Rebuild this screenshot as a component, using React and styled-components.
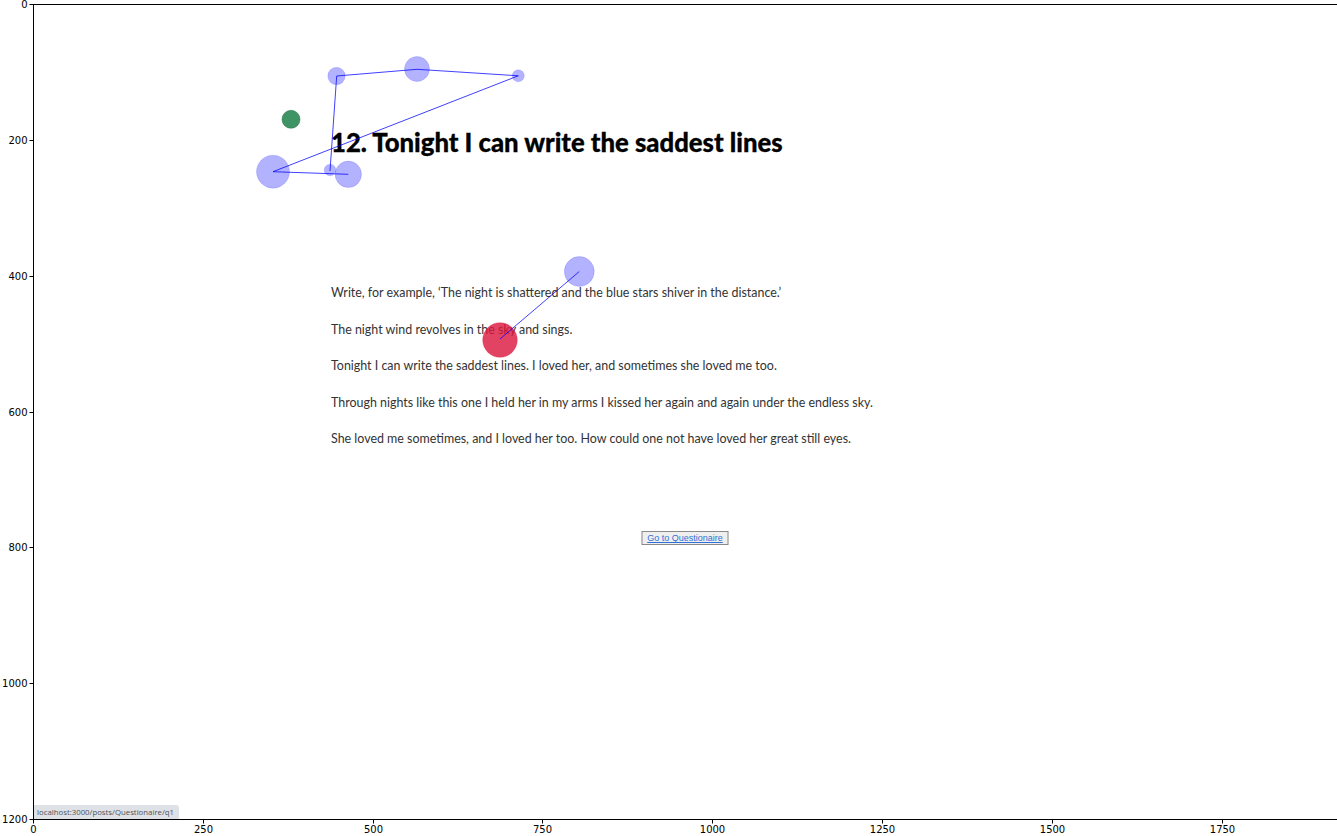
import React from "react";
import styled, { createGlobalStyle } from "styled-components";

const GlobalStyle = createGlobalStyle`
  html, body {
    margin: 0;
    padding: 0;
    background: #ffffff;
    overflow: hidden;
  }
`;

// screen px per page unit (1920 page px squeezed into 1304 plot px)
const SCALE = 0.67917;

const yTicks = [0, 200, 400, 600, 800, 1000, 1200];
const xTicks = [0, 250, 500, 750, 1000, 1250, 1500, 1750];

const fixations = [
  { x: 336.5, y: 76, r: 8.7 },
  { x: 417, y: 69, r: 12.5 },
  { x: 518.3, y: 75.8, r: 6 },
  { x: 273, y: 171.7, r: 16.5 },
  { x: 330, y: 170, r: 5.8 },
  { x: 348.3, y: 174.3, r: 13.2 },
  { x: 579.3, y: 271.5, r: 15 },
];

const scanPath = "348.3,174.3 273,171.7 518.3,75.8 417,69.3 336.7,76 330,171";

const lines = [
  "Write, for example, \u2018The night is shattered and the blue stars shiver in the distance.\u2019",
  "The night wind revolves in the sky and sings.",
  "Tonight I can write the saddest lines. I loved her, and sometimes she loved me too.",
  "Through nights like this one I held her in my arms I kissed her again and again under the endless sky.",
  "She loved me sometimes, and I loved her too. How could one not have loved her great still eyes.",
];

const Figure = styled.div`
  width: 1337px;
  height: 836px;
  display: grid;
  grid-template-columns: 33px 1304px;
  grid-template-rows: 4px 816px 16px;
  font-family: "DejaVu Sans", sans-serif;
`;

const YAxis = styled.svg`
  grid-column: 1;
  grid-row: 1 / span 3;
  overflow: visible;
`;

const XAxis = styled.svg`
  grid-column: 2;
  grid-row: 3;
  overflow: visible;
`;

const TickLabel = styled.text`
  font-family: "DejaVu Sans", sans-serif;
  font-size: 10px;
  fill: #000;
`;

const PlotArea = styled.div`
  grid-column: 2;
  grid-row: 2;
  position: relative;
  box-sizing: border-box;
  border-top: 1px solid #000;
  border-left: 1px solid #000;
  border-bottom: 1px solid #000;
  overflow: hidden;
`;

const Column = styled.div`
  width: 708px;
  margin: 0 auto;
  padding-top: 122px;
  transform: translateX(-0.5px);
`;

const Title = styled.h1`
  margin: 0 0 126.1px;
  font-family: Lato, "Open Sans", sans-serif;
  font-weight: 900;
  font-size: 25.7px;
  line-height: 30px;
  color: #000;
  white-space: nowrap;
  -webkit-text-stroke: 0.3px #000;
`;

const Verse = styled.p`
  margin: 0 0 16.6px;
  font-family: Lato, "Open Sans", sans-serif;
  font-size: 12.45px;
  line-height: 20px;
  color: #333;
  white-space: nowrap;
`;

const ButtonRow = styled.div`
  margin-top: 81.9px;
  text-align: center;
  line-height: 14px;
`;

const LinkButton = styled.button`
  box-sizing: border-box;
  height: 14px;
  padding: 0 5px;
  border: 1px solid #8a8a8a;
  background: #efefef;
  font-family: "Liberation Sans", Arial, sans-serif;
  font-size: 9px;
  line-height: 12px;
  color: #2f6fd6;
  text-decoration: underline;
  vertical-align: top;
`;

const StatusBubble = styled.div`
  position: absolute;
  left: 0;
  bottom: 0;
  height: 14px;
  padding: 0 5px 0 3px;
  background: #dee1e6;
  font-family: "Open Sans", sans-serif;
  font-size: 7.8px;
  line-height: 14px;
  color: #4f5358;
  border-top-right-radius: 3px;
`;

const Overlay = styled.svg`
  position: absolute;
  inset: 0;
  pointer-events: none;
`;

const Gaze = ({ x, y, r }) => (
  <circle
    cx={x}
    cy={y}
    r={r}
    fill="#0000ff"
    fillOpacity="0.3"
    stroke="#0000ff"
    strokeOpacity="0.12"
    strokeWidth="1"
  />
);

export default function App() {
  return (
    <>
      <GlobalStyle />
      <Figure>
        <YAxis width="33" height="836">
          {yTicks.map((v) => {
            const y = Math.round(4 + v * SCALE) + 0.5;
            return (
              <g key={v}>
                <line x1="29.5" x2="33" y1={y} y2={y} stroke="#000" strokeWidth="1" />
                <TickLabel x="27.5" y={y} textAnchor="end" dominantBaseline="central">
                  {v}
                </TickLabel>
              </g>
            );
          })}
        </YAxis>

        <PlotArea>
          <Column>
            <Title>12. Tonight I can write the saddest lines</Title>
            {lines.map((t) => (
              <Verse key={t}>{t}</Verse>
            ))}
            <ButtonRow>
              <LinkButton>Go to Questionaire</LinkButton>
            </ButtonRow>
          </Column>

          <StatusBubble>localhost:3000/posts/Questionaire/q1</StatusBubble>

          <Overlay width="1303" height="814" viewBox="34 5 1303 814">
            {fixations.map((f, i) => (
              <Gaze key={i} {...f} />
            ))}
            <circle cx="291" cy="119.3" r="9" fill="#2e8b57" fillOpacity="0.92" stroke="#1f6b40" strokeOpacity="0.5" />
            <circle cx="500" cy="340" r="17.3" fill="#dc143c" fillOpacity="0.8" stroke="#dc143c" strokeOpacity="0.3" />
            <polyline points={scanPath} fill="none" stroke="#0000ff" strokeOpacity="0.75" strokeWidth="1" />
            <line x1="579.3" y1="271.5" x2="500" y2="339" stroke="#0000ff" strokeOpacity="0.75" strokeWidth="1" />
          </Overlay>
        </PlotArea>

        <XAxis width="1304" height="16">
          {xTicks.map((v) => {
            const x = Math.round(v * SCALE) + 0.5;
            return (
              <g key={v}>
                <line x1={x} x2={x} y1="0" y2="3.5" stroke="#000" strokeWidth="1" />
                <TickLabel x={x} y="9" textAnchor="middle" dominantBaseline="central">
                  {v}
                </TickLabel>
              </g>
            );
          })}
        </XAxis>
      </Figure>
    </>
  );
}
